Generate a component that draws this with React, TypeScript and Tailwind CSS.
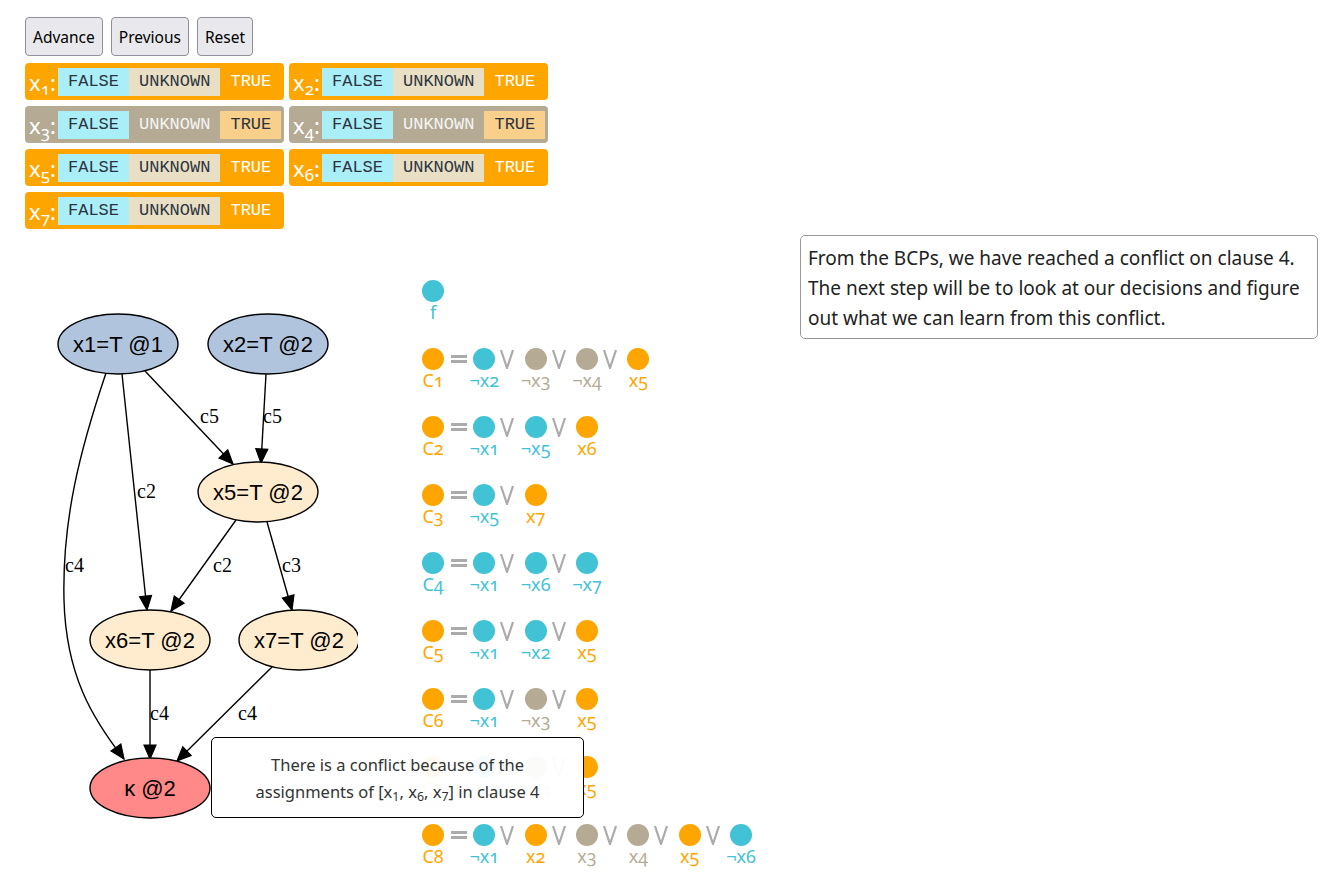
import React, { Fragment } from "react";

const ORANGE = "#FFA500";
const CYAN = "#41C3D5";
const TAN = "#B5AB95";

const UI = { fontFamily: "'Noto Sans', 'Open Sans', sans-serif" };
const LABEL = { fontFamily: "'Noto Sans', Lato, sans-serif" };

type VarState = "orange" | "tan";

function VarBox({ n, state }: { n: number; state: VarState }) {
  const tan = state === "tan";
  return (
    <div
      className={`flex h-[37px] items-center rounded-[4px] pl-[4px] ${tan ? "bg-[#B5AB94]" : "bg-[#FFA500]"}`}
    >
      <div className="w-[29px] text-[22px] leading-[28px] text-white oldstyle-nums" style={LABEL}>
        x<sub className="text-[17px]">{n}</sub>:
      </div>
      <div className="flex h-[28px] items-stretch text-[17px] leading-[28px]" style={{ fontFamily: "'Liberation Mono', 'Courier New', monospace" }}>
        <span className="bg-[#AAEEF8] px-[10px] text-[#2d3440]">FALSE</span>
        {tan ? (
          <span className="px-[10px] text-[#f4f4f4]">UNKNOWN</span>
        ) : (
          <span className="bg-[#E9DFC5] px-[10px] text-[#2d3440]">UNKNOWN</span>
        )}
        {tan ? (
          <span className="bg-[#F9D08B] px-[10px] text-[#2d3440]">TRUE</span>
        ) : (
          <span className="px-[10px] text-white">TRUE</span>
        )}
      </div>
    </div>
  );
}

function Item({ color, label }: { color: string; label: string }) {
  return (
    <div className="flex w-[22px] flex-col items-center">
      <div className="h-[22px] w-[22px] shrink-0 rounded-full" style={{ backgroundColor: color }} />
      <div className="whitespace-nowrap text-[18px] leading-[20px] oldstyle-nums" style={{ ...LABEL, color }}>
        {label}
      </div>
    </div>
  );
}

function Eq() {
  return (
    <div className="flex h-[22px] w-[29.33px] flex-col items-center justify-center gap-[2px]">
      <div className="h-[3px] w-[16px] bg-[#ABABAB]" />
      <div className="h-[3px] w-[16px] bg-[#ABABAB]" />
    </div>
  );
}

function Or() {
  return (
    <div className="flex h-[22px] w-[29.33px] items-center justify-center pr-[5px]">
      <svg width="14" height="20" viewBox="0 0 14 20">
        <path d="M1 1 L7 19 L13 1" fill="none" stroke="#ABABAB" strokeWidth="2.2" />
      </svg>
    </div>
  );
}

type Lit = [string, string];

function Clause({ head, n, lits }: { head: string; n: number; lits: Lit[] }) {
  return (
    <div className="flex h-[68px] items-start">
      <Item color={head} label={`C${n}`} />
      <Eq />
      {lits.map((l, i) => (
        <Fragment key={i}>
          {i > 0 && <Or />}
          <Item color={l[1]} label={l[0]} />
        </Fragment>
      ))}
    </div>
  );
}

const clauses: { head: string; lits: Lit[] }[] = [
  { head: ORANGE, lits: [["¬x2", CYAN], ["¬x3", TAN], ["¬x4", TAN], ["x5", ORANGE]] },
  { head: ORANGE, lits: [["¬x1", CYAN], ["¬x5", CYAN], ["x6", ORANGE]] },
  { head: ORANGE, lits: [["¬x5", CYAN], ["x7", ORANGE]] },
  { head: CYAN, lits: [["¬x1", CYAN], ["¬x6", CYAN], ["¬x7", CYAN]] },
  { head: ORANGE, lits: [["¬x1", CYAN], ["¬x2", CYAN], ["x5", ORANGE]] },
  { head: ORANGE, lits: [["¬x1", CYAN], ["¬x3", TAN], ["x5", ORANGE]] },
  { head: ORANGE, lits: [["¬x1", CYAN], ["¬x4", TAN], ["x5", ORANGE]] },
  {
    head: ORANGE,
    lits: [["¬x1", CYAN], ["x2", ORANGE], ["x3", TAN], ["x4", TAN], ["x5", ORANGE], ["¬x6", CYAN]],
  },
];

function Arrow({ d, from, tip }: { d: string; from: [number, number]; tip: [number, number] }) {
  const dx = tip[0] - from[0];
  const dy = tip[1] - from[1];
  const len = Math.hypot(dx, dy);
  const ux = dx / len;
  const uy = dy / len;
  const L = 14;
  const W = 6;
  const bx = tip[0] - ux * L;
  const by = tip[1] - uy * L;
  const p1 = `${bx - uy * W},${by + ux * W}`;
  const p2 = `${bx + uy * W},${by - ux * W}`;
  return (
    <g>
      <path d={d} fill="none" stroke="#000" strokeWidth="1.4" />
      <polygon points={`${tip[0]},${tip[1]} ${p1} ${p2}`} fill="#000" stroke="#000" strokeWidth="1.2" />
    </g>
  );
}

function Node({ cx, cy, fill, text }: { cx: number; cy: number; fill: string; text: string }) {
  return (
    <g>
      <ellipse cx={cx} cy={cy} rx={60} ry={30} fill={fill} stroke="#000" strokeWidth="1.4" />
      <text
        x={cx}
        y={cy + 8}
        textAnchor="middle"
        fontSize="22"
        fontFamily="'Liberation Sans', Arial, sans-serif"
        fill="#000"
      >
        {text}
      </text>
    </g>
  );
}

function EdgeLabel({ x, y, t }: { x: number; y: number; t: string }) {
  return (
    <text x={x} y={y} fontSize="20" fontFamily="'Liberation Serif', 'Times New Roman', serif" fill="#000">
      {t}
    </text>
  );
}

function Graph() {
  return (
    <svg width="333" height="600" viewBox="25 235 333 600" className="shrink-0">
      <Arrow d="M145 371 L233 464" from={[145, 371]} tip={[233, 464]} />
      <Arrow d="M266 374 L261 463" from={[266, 374]} tip={[261, 463]} />
      <Arrow d="M122 374 L147 610" from={[122, 374]} tip={[147, 610]} />
      <Arrow
        d="M106 373 C80 450 62 520 64 600 C66 675 92 718 124 759"
        from={[98, 722]}
        tip={[124, 759]}
      />
      <Arrow d="M236 520 L171 611" from={[236, 520]} tip={[171, 611]} />
      <Arrow d="M267 522 L292 610" from={[267, 522]} tip={[292, 610]} />
      <Arrow d="M150 670 L150 759" from={[150, 670]} tip={[150, 759]} />
      <Arrow d="M272 667 L177 761" from={[272, 667]} tip={[177, 761]} />

      <EdgeLabel x={200} y={423} t="c5" />
      <EdgeLabel x={263} y={423} t="c5" />
      <EdgeLabel x={137} y={498} t="c2" />
      <EdgeLabel x={65} y={572} t="c4" />
      <EdgeLabel x={213} y={572} t="c2" />
      <EdgeLabel x={282} y={572} t="c3" />
      <EdgeLabel x={150} y={720} t="c4" />
      <EdgeLabel x={238} y={720} t="c4" />

      <Node cx={118} cy={344} fill="#B0C4DE" text="x1=T @1" />
      <Node cx={268} cy={344} fill="#B0C4DE" text="x2=T @2" />
      <Node cx={258} cy={492} fill="#FFEBCD" text="x5=T @2" />
      <Node cx={150} cy={640} fill="#FFEBCD" text="x6=T @2" />
      <Node cx={299} cy={640} fill="#FFEBCD" text="x7=T @2" />
      <Node cx={150} cy={788} fill="#FF8888" text="κ @2" />
    </svg>
  );
}

export default function App() {
  const vars: [number, VarState][] = [
    [1, "orange"],
    [2, "orange"],
    [3, "tan"],
    [4, "tan"],
    [5, "orange"],
    [6, "orange"],
    [7, "orange"],
  ];
  return (
    <div className="relative h-[882px] w-[1343px] overflow-hidden bg-white pl-[25px] pt-[17px]" style={UI}>
      <div className="flex gap-[8px]">
        {["Advance", "Previous", "Reset"].map((b) => (
          <button
            key={b}
            className="h-[39px] rounded-[4px] border border-[#8f8f9d] bg-[#e9e9ed] px-[7px] pt-[2px] text-[15.5px] text-black"
            style={UI}
          >
            {b}
          </button>
        ))}
      </div>

      <div className="mt-[7px] grid grid-cols-[259px_259px] gap-x-[5px] gap-y-[6px]">
        {vars.map(([n, s]) => (
          <VarBox key={n} n={n} state={s} />
        ))}
      </div>

      <div className="mt-[6px] flex items-start">
        <Graph />
        <div className="ml-[64px] mt-[45px] w-[378px] shrink-0">
          <div className="flex h-[68px] items-start">
            <Item color={CYAN} label="f" />
          </div>
          {clauses.map((c, i) => (
            <Clause key={i} head={c.head} n={i + 1} lits={c.lits} />
          ))}
        </div>
        <div className="w-[518px] shrink-0 rounded-[5px] border border-[#999] px-[7px] pb-[5px] pt-[7px] text-[19px] leading-[30px] text-[#222]">
          From the BCPs, we have reached a conflict on clause 4. The next step will be to look at our decisions and
          figure out what we can learn from this conflict.
        </div>
      </div>

      <div className="absolute left-[211px] top-[737px] h-[81px] w-[373px] rounded-[5px] border border-black bg-white/95 pt-[13px] text-center text-[16.5px] leading-[27px] text-[#333]">
        There is a conflict because of the
        <br />
        assignments of [x<sub>1</sub>, x<sub>6</sub>, x<sub>7</sub>] in clause 4
      </div>
    </div>
  );
}
